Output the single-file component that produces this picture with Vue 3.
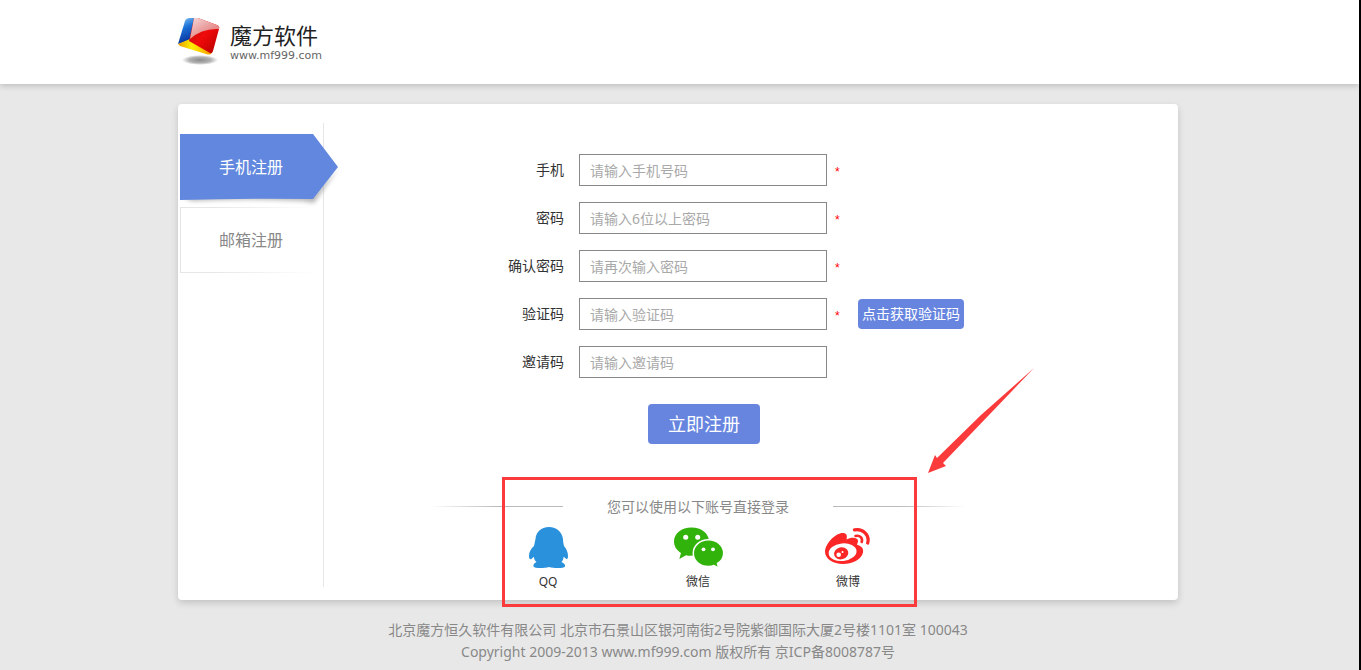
<script setup>
import { ref } from 'vue'

const fields = [
  { id: 'phone', label: '手机', type: 'text', hint: '请输入手机号码', required: true },
  { id: 'password', label: '密码', type: 'password', hint: '请输入6位以上密码', required: true },
  { id: 'confirm', label: '确认密码', type: 'password', hint: '请再次输入密码', required: true },
  { id: 'code', label: '验证码', type: 'text', hint: '请输入验证码', required: true },
  { id: 'invite', label: '邀请码', type: 'text', hint: '请输入邀请码', required: false }
]
const form = ref({ phone: '', password: '', confirm: '', code: '', invite: '' })
</script>

<template>
  <div class="page">
    <header class="header">
      <div class="wrap">
        <a class="brand" href="#">
          <svg width="42" height="48" viewBox="0 0 42 48" aria-hidden="true">
            <defs>
              <linearGradient id="blue" x1="0.2" y1="0" x2="0.5" y2="1">
                <stop offset="0" stop-color="#7ec0f2" />
                <stop offset="0.4" stop-color="#1b6fd6" />
                <stop offset="1" stop-color="#062b96" />
              </linearGradient>
              <linearGradient id="red" x1="0" y1="0" x2="1" y2="1">
                <stop offset="0" stop-color="#b81010" />
                <stop offset="0.5" stop-color="#f00a0a" />
                <stop offset="1" stop-color="#b30000" />
              </linearGradient>
              <linearGradient id="shine" x1="0" y1="0" x2="0.8" y2="1">
                <stop offset="0" stop-color="#f6d9d9" />
                <stop offset="1" stop-color="#e06a6a" />
              </linearGradient>
              <linearGradient id="gold" x1="0" y1="0" x2="1" y2="0">
                <stop offset="0" stop-color="#e89a00" />
                <stop offset="0.4" stop-color="#fff000" />
                <stop offset="1" stop-color="#f59b00" />
              </linearGradient>
              <radialGradient id="shade">
                <stop offset="0" stop-color="#8c8c8c" />
                <stop offset="0.6" stop-color="#b2b2b2" />
                <stop offset="1" stop-color="#fff" />
              </radialGradient>
            </defs>
            <ellipse cx="22" cy="42" rx="18" ry="5" fill="url(#shade)" />
            <path d="M7 3Q8 0 12 0H18L12 22L0 26Z" fill="url(#blue)" />
            <path d="M0 26L12 21L34 34L33 36Q31 37 28 36L2 28Z" fill="url(#gold)" />
            <path d="M16 0H20L39 7Q42 8 41 11L35 33Q34 36 32 35L11 23Z" fill="url(#red)" />
            <path d="M16 0H20L39 7Q42 8 41 11Q24 10 12 21Z" fill="url(#shine)" />
          </svg>
          <span class="brand-text">
            <strong>魔方软件</strong>
            <small>www.mf999.com</small>
          </span>
        </a>
      </div>
    </header>

    <div class="wrap">
      <main class="card">
        <nav class="side">
          <a class="tab active" href="#phone">
            <svg class="tab-shape" width="168" height="76" viewBox="0 0 168 76" aria-hidden="true">
              <defs>
                <filter id="soft" x="-10%" y="-10%" width="120%" height="130%">
                  <feGaussianBlur stdDeviation="2" />
                </filter>
              </defs>
              <path d="M1 62L12 67Q66 64 122 67L134 69L158 35L133 60Z" fill="#888" opacity="0.6" filter="url(#soft)" />
              <path d="M0 0H133L158 33L133 65Q66 64 0 66Z" fill="#6187de" />
            </svg>
            <span>手机注册</span>
          </a>
          <a class="tab plain" href="#mail"><span>邮箱注册</span></a>
        </nav>

        <div class="content">
          <form @submit.prevent>
            <div v-for="f in fields" :key="f.id" class="row">
              <label :for="f.id">{{ f.label }}</label>
              <input :id="f.id" v-model="form[f.id]" :type="f.type" :placeholder="f.hint" />
              <span v-if="f.required" class="star">*</span>
              <button v-if="f.id === 'code'" type="button" class="code-btn">点击获取验证码</button>
            </div>
            <button type="submit" class="submit">立即注册</button>
          </form>

          <section class="social">
            <h2><span>您可以使用以下账号直接登录</span></h2>
            <ul>
              <li>
                <a href="#qq">
                  <svg width="40" height="42" viewBox="0 0 40 42" aria-hidden="true">
                    <path fill="#2a91dc" d="M20 0C28 0 33 5 34 12C34 14 34.500 17 35 19C37.500 22 39 25 39 29C39 31 38.500 32.500 37.500 32C36.500 31.500 35.500 30 34.500 30C34.500 32 33.500 34 32.500 35C35 36 36.500 38 36 39.500C35 41.500 25 41.500 20 40C15 41.500 5.500 41.500 4.500 39.500C4 38 5 36 7.500 35C6 34 5 32 5 30C4 30 3 32 2 32.200C.500 32.500 0 31 0 29C0 25 2 21.500 5 19C5.500 17 6 14 6.500 12C7 5 12 0 20 0Z" />
                  </svg>
                  <span>QQ</span>
                </a>
              </li>
              <li>
                <a href="#wechat">
                  <svg width="50" height="42" viewBox="0 0 50 42" aria-hidden="true">
                    <path fill="#32b30b" d="M17.500 .500C7.500 .500 0 6.500 0 14.500C0 19.500 3 23.500 7 26L5.300 32L12 28.200C20 30.500 35 26 35 14.500C35 6.500 27.500 .500 17.500 .500Z" />
                    <circle cx="11.700" cy="10.300" r="2.500" fill="#fff" />
                    <circle cx="23.700" cy="10.300" r="2.500" fill="#fff" />
                    <path fill="#32b30b" stroke="#fff" stroke-width="1.500" d="M34.500 12.800C26 12.800 19.300 18.500 19.300 26.200C19.300 34 26 39.500 34.500 39.500C36.500 39.500 38.500 39.200 40 38.500L44.800 41.200L43.500 36.500C47.500 34 49.700 30.500 49.700 26.200C49.700 18.500 43 12.800 34.500 12.800Z" />
                    <circle cx="29.500" cy="22.300" r="1.900" fill="#fff" />
                    <circle cx="39" cy="22.300" r="1.900" fill="#fff" />
                  </svg>
                  <span>微信</span>
                </a>
              </li>
              <li>
                <a href="#weibo">
                  <svg width="48" height="42" viewBox="0 0 48 42" aria-hidden="true">
                    <path fill="#fb2626" d="M0 24.500C0 18 8 8.500 15 6.500C20 5.200 23 7 21.500 12.500C26 10 32.500 10 33 13.500C33.200 15.500 32 17 32 17.800C36.500 19 38.800 21.500 38 25.500C36.500 32.500 27 37 18 37C8 37 0 32 0 24.500Z" />
                    <ellipse cx="17.600" cy="25.200" rx="14" ry="8.800" transform="rotate(-6 17.600 25.200)" fill="#fff" />
                    <ellipse cx="16.200" cy="26.300" rx="7.200" ry="6" transform="rotate(-15 16.200 26.300)" fill="#fb2626" />
                    <circle cx="13.700" cy="27.800" r="2.300" fill="#fff" />
                    <circle cx="17.500" cy="25" r="1" fill="#fff" />
                    <g fill="none" stroke="#fb2626" stroke-linecap="round">
                      <path stroke-width="3.200" d="M29.500 2.900C38 1.200 44.800 8 42.700 16" />
                      <path stroke-width="2.600" d="M30.500 9C35 8 38 11 36.700 15" />
                    </g>
                  </svg>
                  <span>微博</span>
                </a>
              </li>
            </ul>
            <div class="callout" aria-hidden="true"></div>
            <svg class="arrow" width="110" height="108" viewBox="0 0 110 108" aria-hidden="true">
              <path fill="#fb3b3b" d="M107 0L54 47L10 90L8 87L1 105L19 98L16 95Z" />
            </svg>
          </section>
        </div>
      </main>
    </div>

    <footer class="footer">
      <p>北京魔方恒久软件有限公司 北京市石景山区银河南街2号院紫御国际大厦2号楼1101室 100043</p>
      <p>Copyright 2009-2013 www.mf999.com 版权所有 京ICP备8008787号</p>
    </footer>
  </div>
</template>

<style>
body {
  margin: 0;
  background: #e8e8e8;
}
</style>

<style scoped>
.page {
  box-sizing: border-box;
  min-height: 100vh;
  border-right: 2px solid #000;
  background: #e8e8e8;
  color: #333;
  font: 14px/20px "Noto Sans", "Noto Sans CJK SC", sans-serif;
}
a {
  color: inherit;
  text-decoration: none;
}
.header {
  height: 84px;
  background: #fff;
  box-shadow: 0 2px 6px rgba(0, 0, 0, 0.18);
}
.wrap {
  max-width: 1000px;
  margin: 0 auto;
  padding-right: 3px;
}
.brand {
  display: flex;
  gap: 10px;
  padding-top: 18px;
}
.brand-text {
  display: flex;
  flex-direction: column;
  padding-top: 2px;
}
.brand-text strong {
  font-size: 22px;
  line-height: 30px;
  font-weight: 400;
  color: #222;
}
.brand-text small {
  font: 11px/12px "DejaVu Sans", sans-serif;
  color: #666;
}
.card {
  display: flex;
  margin-top: 20px;
  border-radius: 4px;
  background: #fff;
  box-shadow: 0 3px 7px rgba(0, 0, 0, 0.16);
}
.side {
  box-sizing: border-box;
  width: 146px;
  margin: 19px 0 13px;
  padding: 11px 0 0 2px;
  border-right: 1px solid #e6e6e6;
}
.tab {
  position: relative;
  display: block;
  box-sizing: border-box;
  height: 66px;
  padding-left: 39px;
  font-size: 16px;
  line-height: 66px;
}
.tab span {
  position: relative;
}
.active {
  color: #fff;
}
.tab-shape {
  position: absolute;
  left: 0;
  top: 0;
}
.plain {
  margin-top: 7px;
  color: #888;
  background:
    linear-gradient(#e6e6e6, #e6e6e6) left / 1px 100% no-repeat,
    linear-gradient(90deg, #e6e6e6 20%, #fff 95%) top / 100% 1px no-repeat,
    linear-gradient(90deg, #e6e6e6 20%, #fff 95%) bottom / 100% 1px no-repeat;
}
.content {
  flex: 1;
  padding: 50px 0 8px;
}
.row {
  display: flex;
  align-items: center;
  height: 32px;
  margin-bottom: 16px;
}
.row label {
  width: 240px;
  margin-right: 15px;
  text-align: right;
}
.row input {
  box-sizing: border-box;
  width: 248px;
  height: 32px;
  padding: 0 10px;
  border: 1px solid #888;
  background: #fff;
  font: inherit;
  color: #333;
}
.row input::placeholder {
  color: #a9a9a9;
  opacity: 1;
}
.star {
  width: 23px;
  margin-left: 8px;
  padding-top: 4px;
  font: 12px/28px "Liberation Sans", sans-serif;
  color: #f00;
}
button {
  padding: 0 0 2px;
  border: 0;
  border-radius: 4px;
  background: #6785df;
  color: #fff;
  font-family: inherit;
  white-space: nowrap;
}
.code-btn {
  width: 106px;
  height: 30px;
  font-size: 14px;
}
.submit {
  display: block;
  width: 112px;
  height: 40px;
  margin: 26px 0 0 324px;
  font-size: 18px;
}
.social {
  position: relative;
  margin-top: 53px;
}
h2 {
  display: flex;
  align-items: center;
  gap: 44px;
  margin: 0 0 10px 106px;
  font-size: 14px;
  line-height: 20px;
  font-weight: 400;
  color: #888;
}
h2::before,
h2::after {
  content: "";
  width: 133px;
  height: 1px;
  margin-bottom: 1px;
  background: linear-gradient(90deg, #fff, #bbb 50%);
}
h2::after {
  background: linear-gradient(270deg, #fff, #bbb 50%);
}
ul {
  display: flex;
  margin: 0 0 0 149px;
  padding: 0;
  list-style: none;
}
li {
  width: 150px;
}
li a {
  display: flex;
  flex-direction: column;
  align-items: center;
  gap: 3px;
  font-size: 12px;
}
li svg {
  margin-left: 2px;
}
.callout {
  position: absolute;
  left: 178px;
  top: -20px;
  box-sizing: border-box;
  width: 415px;
  height: 130px;
  border: 3px solid #fb3b3b;
}
.arrow {
  position: absolute;
  left: 603px;
  top: -129px;
}
.footer {
  margin-top: 19px;
  padding: 0 3px 7px 0;
  text-align: center;
  line-height: 22px;
  color: #888;
}
.footer p {
  margin: 0;
}
</style>
